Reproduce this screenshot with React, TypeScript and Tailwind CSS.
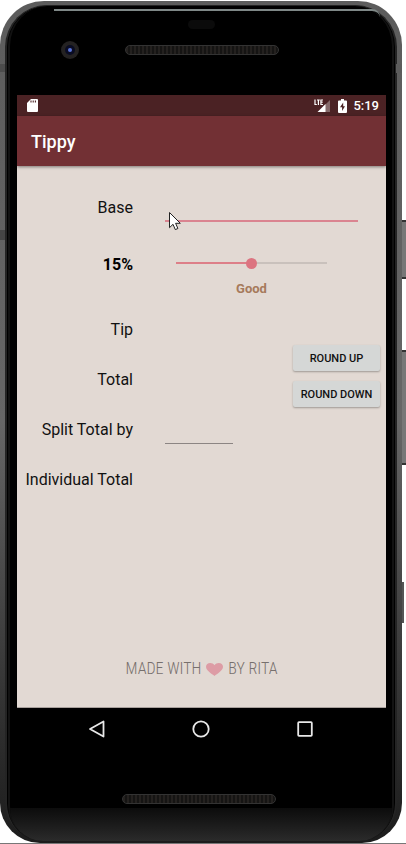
import { useState } from "react";

function Speaker() {
  return (
    <div className="h-[10px] w-[154px] rounded-full border border-[#333333] bg-[repeating-linear-gradient(90deg,#24211f_0px,#24211f_2px,#151413_2px,#151413_4px)]" />
  );
}

function TopBezel() {
  return (
    <div className="flex h-[89px] flex-col">
      <div className="mr-3 ml-11 mt-[3px] h-2 rounded-tr-[28px] border-t-2 border-[#7f8887]" />
      <div className="mx-auto mt-[3px] h-[9px] w-[27px] rounded-full bg-[#0b0b0b]" />
      <div className="mt-3 grid grid-cols-[1fr_auto_1fr] items-center pr-10 pl-[41px]">
        <div className="ml-[10px] flex size-[18px] items-center justify-center rounded-full bg-[#242222]">
          <div className="flex size-[10px] items-center justify-center rounded-full bg-[#0a0c22]">
            <div className="size-1 rounded-full bg-[#5a74d8]" />
          </div>
        </div>
        <Speaker />
        <div />
      </div>
    </div>
  );
}

function StatusBar() {
  return (
    <div className="flex h-[21px] items-center bg-[#4b2224] pr-[7px] pl-[10px] text-[13px] leading-4 font-medium text-white">
      <svg className="h-[13px] w-[11px]" viewBox="0 0 11 13">
        <path d="M4 0h6a1 1 0 0 1 1 1v11a1 1 0 0 1-1 1H1a1 1 0 0 1-1-1V4z" fill="#fff" />
        <path d="M4 1.5v2M6.2 1.5v2M8.4 1.5v2" stroke="#4b2224" strokeWidth="1.1" />
      </svg>
      <div className="ml-auto flex items-center">
        <svg className="h-[14px] w-4" viewBox="0 0 16 14">
          <path d="M16 1v12H11V6z" fill="#856a6b" />
          <path d="M3.500 13L11.500 5v8z" fill="#fff" />
          <path
            d="M1 0.500v5H2.800M3 1H5.800M4.400 1V6M9 1H6.900V5.500H9M6.900 3.200H8.700"
            fill="none"
            stroke="#fff"
            strokeWidth="1.200"
          />
        </svg>
        <svg className="ml-2 h-[14px] w-[9px]" viewBox="0 0 9 14">
          <path d="M3 0h3v1.500h2a1 1 0 0 1 1 1V13a1 1 0 0 1-1 1H1a1 1 0 0 1-1-1V2.500a1 1 0 0 1 1-1h2z" fill="#fff" />
          <path d="M5.200 3.500L2 8.300h2.100V12L7 7.200H5.200z" fill="#4b2224" />
        </svg>
        <span className="ml-[6px]">5:19</span>
      </div>
    </div>
  );
}

const labelClass = "w-[116px] shrink-0 text-right text-base whitespace-nowrap";

function TipForm() {
  const [percent, setPercent] = useState(15);
  const filled = (percent / 30) * 100;
  const rating =
    percent < 10 ? "Poor" : percent < 15 ? "Acceptable" : percent < 20 ? "Good" : percent < 25 ? "Great" : "Amazing";

  return (
    <form className="pt-[17px] text-[#111111]" onSubmit={(e) => e.preventDefault()}>
      <div className="flex h-[50px]">
        <label htmlFor="base" className={`${labelClass} leading-[50px]`}>
          Base
        </label>
        <input
          id="base"
          type="text"
          inputMode="decimal"
          className="mt-[11px] mr-7 ml-8 h-7 min-w-0 flex-1 border-b-2 border-[#da8490] bg-transparent text-base outline-none"
        />
      </div>

      <div className="flex h-[72px]">
        <label htmlFor="percent" className={`${labelClass} leading-[64px] font-bold text-black`}>
          {percent}%
        </label>
        <div className="mr-[59px] ml-[43px] flex min-w-0 flex-1 flex-col pt-5">
          <input
            id="percent"
            type="range"
            min={0}
            max={30}
            value={percent}
            onChange={(e) => setPercent(Number(e.target.value))}
            style={{
              backgroundImage: `linear-gradient(90deg, #dd7f88 ${filled}%, #c9c1bc ${filled}%)`,
            }}
            className="h-5 w-full appearance-none bg-[length:100%_2px] bg-center bg-no-repeat outline-none [&::-webkit-slider-thumb]:size-[11px] [&::-webkit-slider-thumb]:appearance-none [&::-webkit-slider-thumb]:rounded-full [&::-webkit-slider-thumb]:bg-[#dc7480]"
          />
          <output htmlFor="percent" className="mt-2 text-center text-[13px] leading-4 font-bold text-[#a67a5b]">
            {rating}
          </output>
        </div>
      </div>

      <div className="flex justify-between pr-[6px]">
        <div>
          <div className={`${labelClass} leading-[50px]`}>Tip</div>
          <div className={`${labelClass} leading-[50px]`}>Total</div>
          <div className="flex h-[50px]">
            <label htmlFor="split" className={`${labelClass} leading-[50px]`}>
              Split Total by
            </label>
            <input
              id="split"
              type="text"
              inputMode="numeric"
              className="mt-[11px] ml-8 h-7 w-[68px] border-b border-[#8c8583] bg-transparent text-base outline-none"
            />
          </div>
          <div className={`${labelClass} leading-[50px]`}>Individual Total</div>
        </div>
        <div className="flex flex-col gap-[10px] pt-10 text-[11px] leading-4 font-medium">
          <button type="button" className="h-[26px] w-[87px] rounded-xs bg-[#d5d7d6] pt-px shadow-[0_1px_2px_rgba(0,0,0,0.3)]">
            ROUND UP
          </button>
          <button type="button" className="h-[26px] w-[87px] rounded-xs bg-[#d5d7d6] pt-px shadow-[0_1px_2px_rgba(0,0,0,0.3)]">
            ROUND DOWN
          </button>
        </div>
      </div>
    </form>
  );
}

function Credits() {
  return (
    <footer className="mt-auto mb-7 flex items-center justify-center gap-[5px] font-['Roboto_Condensed','Liberation_Sans_Narrow',Roboto,sans-serif] text-base leading-5 font-light text-[#77706d]">
      <span>MADE WITH</span>
      <svg className="h-[13px] w-[17px]" viewBox="0 0 17 13" aria-label="love">
        <path
          d="M8.500 13C6 10.800 0 7.800 0 3.800 0 1.500 1.800 0 4.200 0 6 0 7.600.8 8.500 2.200 9.400.8 11 0 12.800 0 15.200 0 17 1.500 17 3.800c0 4-6 7-8.500 9.200z"
          fill="#dd9ca5"
        />
      </svg>
      <span>BY RITA</span>
    </footer>
  );
}

function NavBar() {
  return (
    <nav className="flex h-11 items-center justify-center gap-[86px] pr-[2px] pb-[2px] text-[#e8e8e8]">
      <button type="button" aria-label="Back">
        <svg className="size-[18px]" viewBox="0 0 18 18" fill="none" stroke="currentColor" strokeWidth="1.800" strokeLinejoin="round">
          <path d="M15.500 1.500v15L2 9z" />
        </svg>
      </button>
      <button type="button" aria-label="Home">
        <svg className="size-[18px]" viewBox="0 0 18 18" fill="none" stroke="currentColor" strokeWidth="1.800">
          <circle cx="9" cy="9" r="7.700" />
        </svg>
      </button>
      <button type="button" aria-label="Recents">
        <svg className="size-[18px]" viewBox="0 0 18 18" fill="none" stroke="currentColor" strokeWidth="1.800">
          <rect x="2.200" y="2.200" width="13.600" height="13.600" rx="0.800" />
        </svg>
      </button>
    </nav>
  );
}

function SideKeys() {
  return (
    <div className="flex w-1 shrink-0 flex-col">
      <div className="mt-[219px] h-[59px] border-y-2 border-[#333333] bg-[#777777]" />
      <div className="mt-[71px] h-[115px] border-y-2 border-[#333333] bg-[#777777]" />
      <div className="mt-[117px] h-[41px] w-[2px] bg-[#555555]" />
    </div>
  );
}

export default function App() {
  return (
    <div className="relative flex min-h-screen border-b border-[#777777] bg-white pt-px font-[Roboto,'Noto_Sans',sans-serif]">
      <div className="flex min-w-0 flex-1 flex-col rounded-t-[44px] rounded-b-[40px] bg-linear-to-b from-[#5c5c5c] via-[#666666] to-[#1c1c1c] pt-1 pr-[5px] pb-[2px] pl-[5px]">
        <div className="flex flex-1 flex-col rounded-t-[42px] rounded-b-[38px] border-x-2 border-t border-[#242424] bg-black px-px">
          <div className="flex flex-1 flex-col rounded-t-[40px] rounded-b-[35px] border-x-2 border-[#121212]">
            <TopBezel />
            <div className="mr-[6px] ml-[7px] flex flex-1 flex-col">
              <StatusBar />
              <header className="z-10 flex h-[50px] items-center bg-[#723034] px-[14px] pt-px shadow-[0_1px_3px_rgba(0,0,0,0.45)]">
                <h1 className="text-lg font-medium text-white">Tippy</h1>
              </header>
              <main className="flex flex-1 flex-col border-b border-[#a8a09c] bg-[#e2d9d3]">
                <TipForm />
                <Credits />
              </main>
              <NavBar />
            </div>
            <div className="flex h-14 items-end justify-center pr-1 pb-1">
              <Speaker />
            </div>
            <div className="h-[33px] rounded-b-[35px] bg-linear-to-b from-[#0c0c0c] to-[#2b2b2b]" />
          </div>
        </div>
      </div>
      <SideKeys />
      <div className="absolute top-[64px] left-0 h-2 w-[5px] bg-[#4c4c4c]" />
      <div className="absolute top-[230px] left-0 h-[10px] w-[5px] bg-[#454545]" />
      <div className="absolute top-[64px] right-[4px] h-[9px] w-[6px] bg-[#5c5c5c]" />
      <svg className="absolute top-[211px] left-[168px] z-20 h-5 w-[14px]" viewBox="0 0 14 20">
        <path d="M1.500 1.500v15.200l3.500-3.400 2.300 5.300 2.600-1.100-2.300-5.200h4.700z" fill="#fff" stroke="#222" strokeWidth="1" />
      </svg>
    </div>
  );
}
